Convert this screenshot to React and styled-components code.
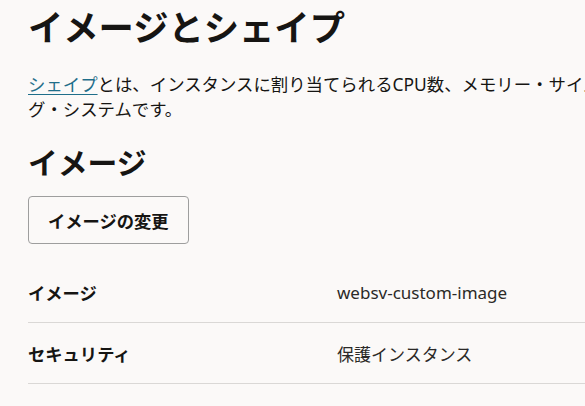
import React from "react";
import styled, { createGlobalStyle } from "styled-components";

const Global = createGlobalStyle`
  html, body { margin: 0; padding: 0; background: #fbf9f8; overflow: hidden; }
  body {
    font-family: "Noto Sans", "Noto Sans CJK JP", sans-serif;
    color: #161513;
  }
`;

const Page = styled.main`
  width: 1300px;
  padding: 0 0 0 28px;
  box-sizing: border-box;
`;

const Title = styled.h1`
  margin: 0;
  padding-top: 4px;
  font-size: 35.3px;
  line-height: 46px;
  font-weight: 700;
  letter-spacing: 0;
`;

const Para = styled.p`
  margin: 22px 0 0;
  font-size: 17.4px;
  line-height: 25px;
  font-weight: 400;
  white-space: nowrap;
`;

const Link = styled.a`
  color: #1f6e8a;
  text-decoration: underline;
  text-underline-offset: 3px;
  text-decoration-thickness: 1px;
`;

const SectionTitle = styled.h2`
  margin: 22px 0 0;
  font-size: 29.8px;
  line-height: 38px;
  font-weight: 700;
`;

const Button = styled.button`
  display: block;
  margin-top: 14px;
  height: 48px;
  padding: 0 19px;
  background: #fbf9f8;
  border: 1px solid #9e9e9e;
  border-radius: 4px;
  font-family: "Noto Sans", "Noto Sans CJK JP", sans-serif;
  font-size: 17.3px;
  font-weight: 600;
  color: #161513;
  white-space: nowrap;
`;

const List = styled.dl`
  margin: 18px 0 0;
`;

const Row = styled.div`
  display: grid;
  grid-template-columns: 309px 1fr;
  align-items: center;
  height: 60px;
  border-bottom: 1px solid #dad8d6;
`;

const Label = styled.dt`
  margin: 0;
  font-size: 17.3px;
  font-weight: 700;
`;

const Value = styled.dd`
  margin: 0;
  font-size: 17px;
  font-weight: 400;
  color: #2b2927;
`;

const rows = [
  { label: "イメージ", value: "websv-custom-image" },
  { label: "セキュリティ", value: "保護インスタンス" },
];

export default function App() {
  return (
    <>
      <Global />
      <Page>
        <Title>イメージとシェイプ</Title>
        <Para>
          <Link href="#">シェイプ</Link>
          とは、インスタンスに割り当てられるCPU数、メモリー・サイズのテンプレートです。イメージはオペレーティン
          <br />
          グ・システムです。
        </Para>
        <SectionTitle>イメージ</SectionTitle>
        <Button type="button">イメージの変更</Button>
        <List>
          {rows.map((r) => (
            <Row key={r.label}>
              <Label>{r.label}</Label>
              <Value>{r.value}</Value>
            </Row>
          ))}
        </List>
      </Page>
    </>
  );
}
